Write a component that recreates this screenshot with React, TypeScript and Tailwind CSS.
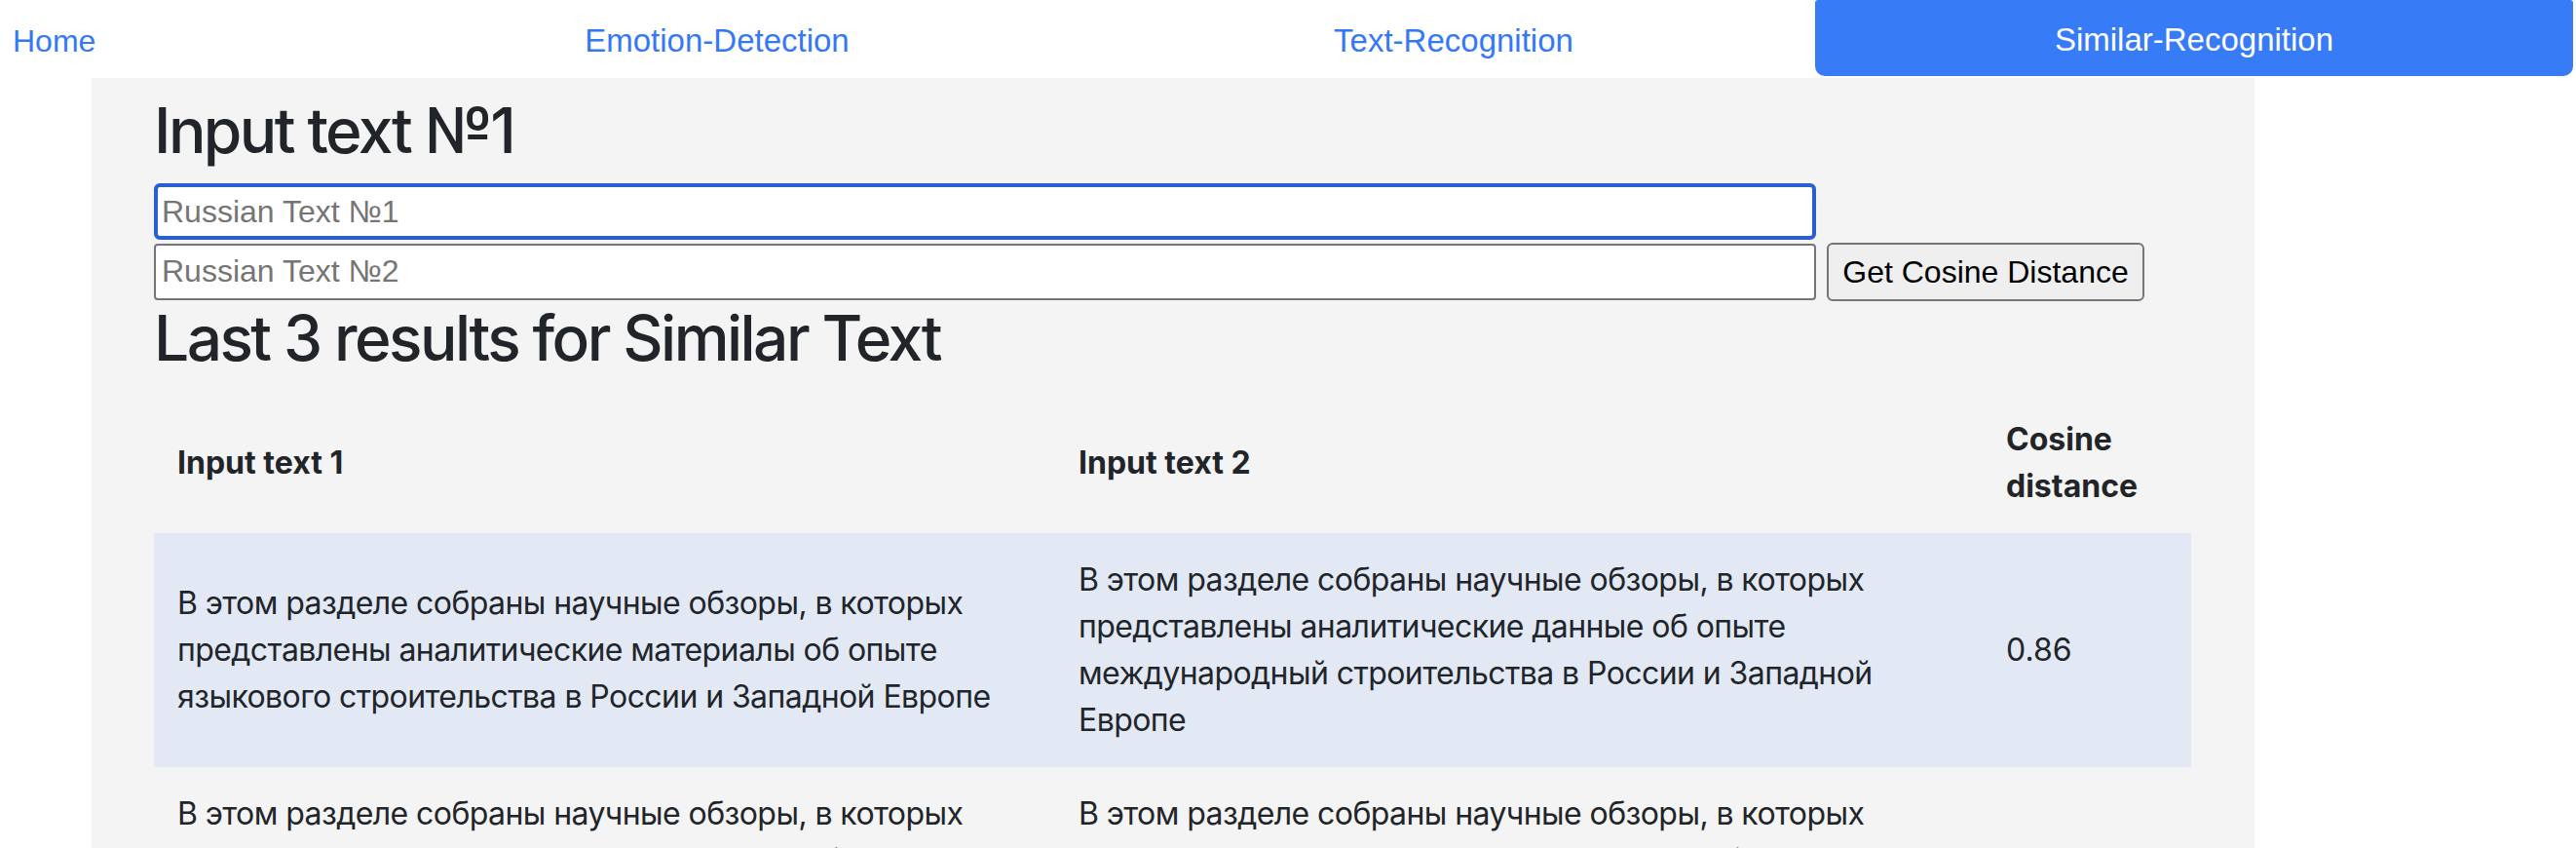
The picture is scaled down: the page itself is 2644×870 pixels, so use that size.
import { useState } from 'react'

const navLinks = [
  { name: 'Home', width: 'w-[351px] justify-start pl-[13px] text-[32px]' },
  { name: 'Emotion-Detection', width: 'w-[770px] justify-center text-[33px]' },
  { name: 'Text-Recognition', width: 'w-[742px] justify-center text-[33px]' },
]

const results = [
  {
    first:
      'В этом разделе собраны научные обзоры, в которых представлены аналитические материалы об опыте языкового строительства в России и Западной Европе',
    second:
      'В этом разделе собраны научные обзоры, в которых представлены аналитические данные об опыте международный строительства в России и Западной Европе',
    distance: '0.86',
  },
  {
    first:
      'В этом разделе собраны научные обзоры, в которых представлены аналитические материалы об опыте языкового строительства в России и Западной Европе',
    second:
      'В этом разделе собраны научные обзоры, в которых представлены аналитические материалы об опыте языкового строительства в России и Западной Европе',
    distance: '1.0',
  },
  {
    first: 'Привет, как дела?',
    second: 'Здравствуйте, как у вас дела?',
    distance: '0.71',
  },
]

const App = () => {
  const [text1, setText1] = useState('')
  const [text2, setText2] = useState('')

  return (
    <div className="min-h-screen bg-white text-[#212529]">
      {/* Top nav */}
      <nav className="flex h-[80px] items-start font-['Liberation_Sans',Arial,sans-serif]">
        {navLinks.map((link) => (
          <a key={link.name} href="#" className={`flex h-[80px] items-center pt-[3px] text-[#3478f6] ${link.width}`}>
            {link.name}
          </a>
        ))}
        <a
          href="#"
          className="flex h-[78px] w-[778px] items-center justify-center rounded-t-[3px] rounded-b-[10px] bg-[#387bf7] pt-[3px] text-[33px] text-white"
        >
          Similar-Recognition
        </a>
      </nav>

      {/* Main panel */}
      <main className="ml-[94px] min-h-[790px] w-[2220px] bg-[#f4f4f4] px-[64px] pt-[16px] pb-[40px] font-['Inter',sans-serif]">
        <h2 className="mb-[15px] text-[64px] leading-[1.2] font-medium tracking-[-0.04em]">Input text №1</h2>

        <div className="flex flex-col font-['Liberation_Sans',Arial,sans-serif] text-[32px]">
          <input
            autoFocus
            value={text1}
            onChange={(e) => setText1(e.target.value)}
            placeholder="Russian Text №1"
            className="mb-[3px] h-[58px] w-[1706px] rounded-[6px] border-[4px] border-[#2a5fcf] bg-white px-[4px] pt-[2px] outline-none placeholder:text-[#757575]"
          />
          <div className="flex items-center gap-[11px]">
            <input
              value={text2}
              onChange={(e) => setText2(e.target.value)}
              placeholder="Russian Text №2"
              className="h-[58px] w-[1706px] rounded-[4px] border-[2px] border-[#767676] bg-white px-[6px] outline-none placeholder:text-[#757575]"
            />
            <button className="h-[60px] w-[326px] rounded-[6px] border-[2px] border-[#767676] bg-[#efefef] text-[32px] text-black">
              Get Cosine Distance
            </button>
          </div>
        </div>

        <h2 className="mb-[17px] text-[64px] leading-[1.2] font-medium tracking-[-0.04em]">
          Last 3 results for Similar Text
        </h2>

        <table className="w-[2091px] table-fixed border-collapse text-left text-[32px] leading-[48px]">
          <colgroup>
            <col className="w-[925px]" />
            <col className="w-[952px]" />
            <col className="w-[214px]" />
          </colgroup>
          <thead>
            <tr>
              <th className="p-[24px] align-middle font-bold">Input text 1</th>
              <th className="p-[24px] align-middle font-bold">Input text 2</th>
              <th className="p-[24px] align-middle font-bold">Cosine distance</th>
            </tr>
          </thead>
          <tbody>
            {results.map((row, index) => (
              <tr key={index} className={index % 2 === 0 ? 'bg-[#e2e9f5]' : ''}>
                <td className="p-[24px] align-middle tracking-[-0.018em]">{row.first}</td>
                <td className="p-[24px] align-middle tracking-[-0.018em]">{row.second}</td>
                <td className="p-[24px] align-middle">{row.distance}</td>
              </tr>
            ))}
          </tbody>
        </table>
      </main>
    </div>
  )
}

export default App
